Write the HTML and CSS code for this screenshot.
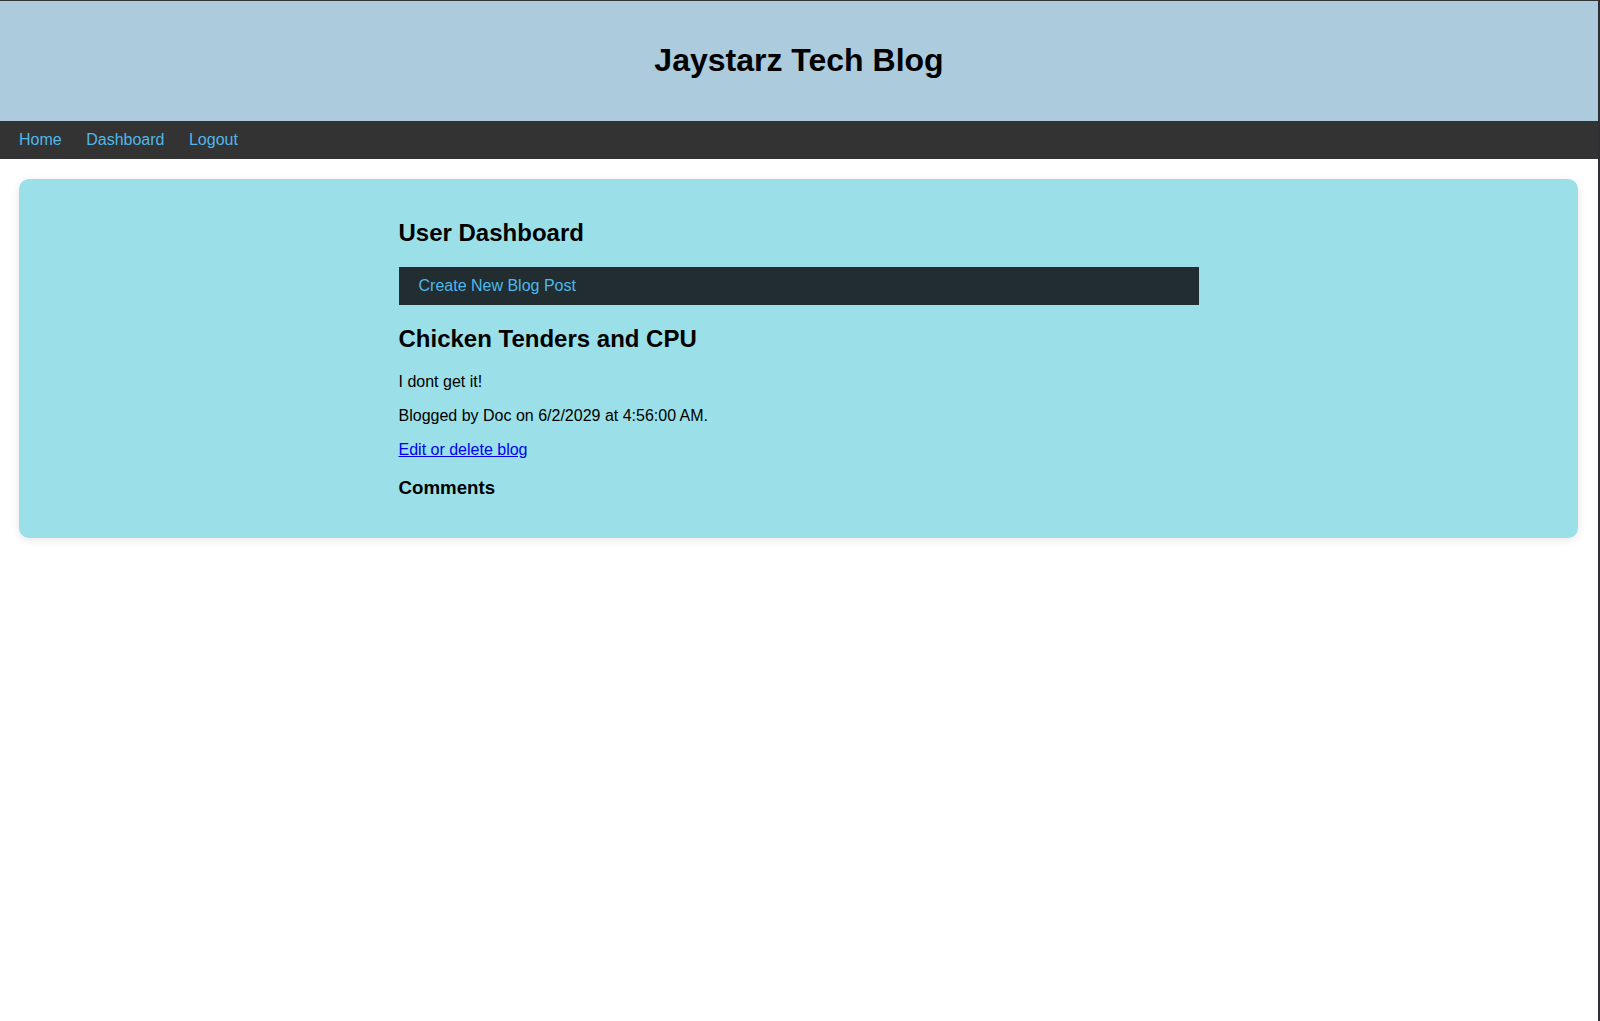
FILE: index.html
```html
<!DOCTYPE html>
<html lang="en">
<head>
<meta charset="utf-8">
<title>Jaystarz Tech Blog</title>
<link rel="stylesheet" href="styles.css">
</head>
<body>
<div class="frame">
  <header class="site-header">
    <h1 class="site-title">Jaystarz Tech Blog</h1>
  </header>
  <nav class="site-nav">
    <a href="#" class="nav-link">Home</a>
    <a href="#" class="nav-link">Dashboard</a>
    <a href="#" class="nav-link">Logout</a>
  </nav>
  <main class="card">
    <div class="content">
      <h2 class="heading">User Dashboard</h2>
      <a href="#" class="create-bar">Create New Blog Post</a>
      <h2 class="heading">Chicken Tenders and CPU</h2>
      <p class="text">I dont get it!</p>
      <p class="text">Blogged by Doc on 6/2/2029 at 4:56:00 AM.</p>
      <p class="text"><a href="#" class="edit-link">Edit or delete blog</a></p>
      <h3 class="subheading">Comments</h3>
    </div>
  </main>
</div>
</body>
</html>
```
FILE: styles.css
```css
html, body {
  margin: 0;
  padding: 0;
  background: #ffffff;
}

body {
  font-family: "Liberation Sans", Arial, sans-serif;
  color: #000000;
}

.frame {
  box-sizing: border-box;
  min-height: 1021px;
  border-top: 1px solid #333333;
  border-right: 2px solid #2c3034;
  overflow: hidden;
}

.site-header {
  background: #accbdc;
  height: 120px;
  box-sizing: border-box;
  padding-top: 41px;
  text-align: center;
}

.site-title {
  margin: 0;
  font-size: 32px;
  font-weight: bold;
  line-height: 36.8px;
}

.site-nav {
  background: #333333;
  height: 38px;
  box-sizing: border-box;
  padding: 9.5px 19px 0;
  display: flex;
  gap: 24.5px;
}

.nav-link {
  color: #4fb8ea;
  text-decoration: none;
  font-size: 16px;
  line-height: 18.4px;
}

.card {
  display: block;
  margin: 20px 20px 0 19px;
  padding: 20px;
  background: #9be0e8;
  border-radius: 10px;
  box-shadow: 0 2px 8px rgba(0, 0, 0, 0.1);
}

.content {
  width: 800px;
  margin: 0 auto;
}

.heading {
  font-size: 24px;
  font-weight: bold;
  margin: 20px 0 20px;
  line-height: 27.6px;
}

.create-bar {
  display: block;
  background: #212d30;
  color: #4fb8ea;
  text-decoration: none;
  font-size: 16px;
  line-height: 18.4px;
  padding: 10px 20px 10px;
}

.text {
  font-size: 16px;
  line-height: 18.4px;
  margin: 16px 0;
}

.edit-link {
  color: #0000ee;
  text-decoration: underline;
}

.subheading {
  font-size: 18.72px;
  font-weight: bold;
  line-height: 21.5px;
  margin: 17px 0 20px;
}
```
